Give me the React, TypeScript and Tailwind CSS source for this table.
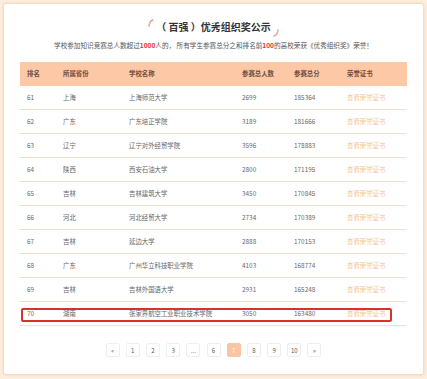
import React from "react";

const rows = [
  { rank: 61, province: "上海", school: "上海师范大学", count: 2699, score: 185364 },
  { rank: 62, province: "广东", school: "广东培正学院", count: 3189, score: 181666 },
  { rank: 63, province: "辽宁", school: "辽宁对外经贸学院", count: 3596, score: 178883 },
  { rank: 64, province: "陕西", school: "西安石油大学", count: 2800, score: 171195 },
  { rank: 65, province: "吉林", school: "吉林建筑大学", count: 3450, score: 170845 },
  { rank: 66, province: "河北", school: "河北经贸大学", count: 2734, score: 170389 },
  { rank: 67, province: "吉林", school: "延边大学", count: 2888, score: 170153 },
  { rank: 68, province: "广东", school: "广州华立科技职业学院", count: 4103, score: 168774 },
  { rank: 69, province: "吉林", school: "吉林外国语大学", count: 2931, score: 165248 },
  { rank: 70, province: "湖南", school: "张家界航空工业职业技术学院", count: 3050, score: 163480 },
];

const pages = ["«", "1", "2", "3", "...", "6", "7", "8", "9", "10", "»"];

const cols = "grid grid-cols-[36px_66px_113px_52px_53px_1fr] items-center pl-[7px]";

export default function App() {
  return (
    <div
      className="min-h-screen w-full bg-[#fdeedd] p-[3px]"
      style={{ fontFamily: '"Noto Sans CJK SC", "Noto Sans", sans-serif' }}
    >
      <div className="h-[372px] rounded-[3px] border border-[#f6dcc6] bg-white pt-[13px] shadow-[0_0_3px_rgba(240,190,150,0.5)]">
        {/* title */}
        <div className="relative flex h-[20px] items-center justify-center">
          <div className="relative">
            <svg className="absolute -left-[8px] top-[2px]" width="6" height="8" viewBox="0 0 6 8">
              <path d="M5 1 Q1.5 2 1 7" stroke="#f29b8c" strokeWidth="1.4" fill="none" strokeLinecap="round" />
            </svg>
            <h1 className="text-[10px] font-bold leading-[20px] text-[#333]">（ 百强 ）优秀组织奖公示</h1>
            <svg className="absolute -right-[8px] bottom-[0px]" width="6" height="8" viewBox="0 0 6 8">
              <path d="M1 7 Q4.5 6 5 1" stroke="#f29b8c" strokeWidth="1.4" fill="none" strokeLinecap="round" />
            </svg>
          </div>
        </div>
        <p className="mt-[3px] text-center text-[6.6px] leading-[10px] text-[#555]">
          学校参加知识竞赛总人数超过<b className="text-[#e5322d]">1000</b>人的， 所有学生参赛总分之和排名前
          <b className="text-[#e5322d]">100</b>的高校荣获《优秀组织奖》荣誉！
        </p>

        {/* table */}
        <div className="mx-[16px] mt-[12px] text-[6.4px]">
          <div className={`${cols} h-[24px] bg-[#fdc8a6] font-bold text-[#6f4d3e]`}>
            <span>排名</span>
            <span>所属省份</span>
            <span>学校名称</span>
            <span>参赛总人数</span>
            <span>参赛总分</span>
            <span>荣誉证书</span>
          </div>
          {rows.map((r) => (
            <div
              key={r.rank}
              className={`${cols} relative h-[24px] border-b border-[#f6dccb] text-[#666]`}
            >
              <span>{r.rank}</span>
              <span>{r.province}</span>
              <span>{r.school}</span>
              <span>{r.count}</span>
              <span>{r.score}</span>
              <span className="text-[#f4c690]">查看荣誉证书</span>
              {r.rank === 70 && (
                <div className="pointer-events-none absolute left-[1px] right-[15px] top-[6px] h-[14px] rounded-[2px] border-2 border-[#dc302b]" />
              )}
            </div>
          ))}
        </div>

        {/* pagination */}
        <div className="mt-[17px] flex justify-center gap-[6.2px]">
          {pages.map((p) => (
            <span
              key={p}
              className={`flex h-[14px] w-[14px] items-center justify-center rounded-[2px] border text-[6px] ${
                p === "7"
                  ? "border-[#fdc4a2] bg-[#fdc4a2] text-white"
                  : "border-[#eee] bg-white text-[#555]"
              }`}
            >
              {p}
            </span>
          ))}
        </div>
      </div>
    </div>
  );
}
